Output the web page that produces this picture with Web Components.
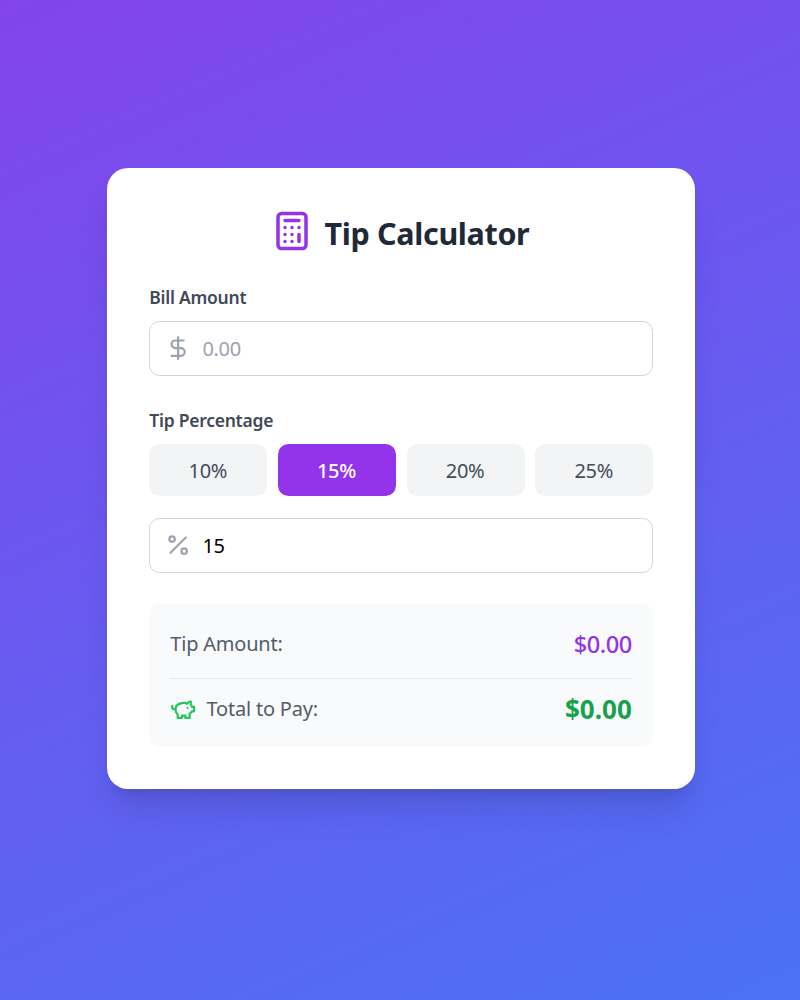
<!DOCTYPE html>
<html lang="en">
<head>
<meta charset="utf-8">
<title>Tip Calculator</title>
<style>
html, body { margin: 0; height: 100%; }
body { font-family: "Noto Sans", "Open Sans", sans-serif; }
</style>
</head>
<body>
<tip-calculator></tip-calculator>
<script>
const ICONS = {
  calculator: '<rect width="16" height="20" x="4" y="2" rx="2"/><path d="M8 6h8M16 14v4M16 10h.01M12 10h.01M8 10h.01M12 14h.01M8 14h.01M12 18h.01M8 18h.01"/>',
  dollar: '<path d="M12 2v20M17 5H9.5a3.5 3.5 0 0 0 0 7h5a3.5 3.5 0 0 1 0 7H6"/>',
  percent: '<path d="M19 5 5 19"/><circle cx="6.5" cy="6.5" r="2.5"/><circle cx="17.5" cy="17.5" r="2.5"/>',
  piggy: '<path d="M19 5c-1.5 0-2.8 1.4-3 2-3.5-1.5-11-.3-11 5 0 1.8 0 3 2 4.5V20h4v-2h3v2h4v-4c1-.5 1.7-1 2-2h2v-4h-2c0-1-.5-1.5-1-2V5z"/><path d="M2 9v1c0 1.1.9 2 2 2h1M16 11h.01"/>'
};
function define(name, html) {
  customElements.define(name, class extends HTMLElement {
    constructor() {
      super();
      this.attachShadow({ mode: 'open' }).innerHTML = html;
    }
  });
}
customElements.define('line-icon', class extends HTMLElement {
  connectedCallback() {
    if (this.shadowRoot) return;
    this.attachShadow({ mode: 'open' }).innerHTML = `
    <style>:host{display:block;flex:none;width:26.25px;height:26.25px} svg{display:block;width:100%;height:100%}</style>
    <svg viewBox="0 0 24 24" fill="none" stroke="currentColor" stroke-width="2" stroke-linecap="round" stroke-linejoin="round">${ICONS[this.getAttribute('name')]}</svg>`;
  }
});
define('card-title', `
<style>
:host{display:flex;align-items:center;justify-content:center;gap:11.5px;height:42px;color:#1f2937;padding-right:2px}
line-icon{width:42px;height:42px;color:#9333ea}
h1{margin:0;font-size:30.5px;line-height:42px;font-weight:700;letter-spacing:-.35px;padding-top:3px;white-space:nowrap}
</style>
<line-icon name="calculator"></line-icon><h1><slot></slot></h1>`);
define('field-label', `
<style>:host{display:block;font-size:17.5px;line-height:26px;font-weight:600;color:#3f4958;letter-spacing:-.25px}</style>
<slot></slot>`);
customElements.define('number-field', class extends HTMLElement {
  connectedCallback() {
    if (this.shadowRoot) return;
    this.attachShadow({ mode: 'open' }).innerHTML = `
    <style>
    :host{display:flex;align-items:center;gap:11px;box-sizing:border-box;height:55px;padding:0 15px;border:1.3px solid #d1d5db;border-radius:10.5px;background:#fff}
    line-icon{color:#9ca3af}
    .value{font-size:20px;line-height:28px;letter-spacing:-.35px;color:#000;padding-top:1px}
    :host([empty]) .value{color:#9ca3af}
    </style>
    <line-icon name="${this.getAttribute('icon')}"></line-icon><span class="value"><slot></slot></span>`;
  }
});
define('tip-option', `
<style>
:host{display:flex;align-items:center;justify-content:center;height:52.5px;border-radius:10.5px;background:#f3f4f6;color:#434d5b;font-size:20px;letter-spacing:-.3px}
:host([selected]){background:#9333ea;color:#fff;font-weight:500}
span{padding-right:1px}
</style><span><slot></slot></span>`);
define('tip-options', `
<style>:host{display:grid;grid-template-columns:repeat(4,1fr);gap:10.5px}</style><slot></slot>`);
define('result-row', `
<style>
:host{display:flex;align-items:center;justify-content:space-between;color:#535d6a;font-size:20px;line-height:32px}
.label{display:flex;align-items:center;gap:10px;letter-spacing:-.2px}
.amount{font-size:23.6px;font-weight:500;color:#9333ea;letter-spacing:-.5px;padding-right:.5px}
:host([total]) .amount{font-size:26px;font-weight:700;color:#16a34a;letter-spacing:0;padding-right:.5px}
::slotted(line-icon){color:#22c55e}
</style>
<div class="label"><slot name="icon"></slot><span><slot></slot></span></div><span class="amount"><slot name="amount"></slot></span>`);
define('result-panel', `
<style>
:host{display:block;box-sizing:border-box;height:143px;padding:24px 21px 0;border-radius:10.5px;background:#f9fafb}
.total{margin-top:18px;padding-top:14px;border-top:1.3px solid #e5e7eb}
</style>
<slot name="tip"></slot><div class="total"><slot name="total"></slot></div>`);
define('tip-calculator', `
<style>
:host{display:flex;justify-content:center;align-items:flex-start;box-sizing:border-box;height:1000px;padding:168.4px 0 0 2.5px;background:linear-gradient(156deg,#8344ec 0%,#4b72f4 100%)}
main{box-sizing:border-box;width:588px;height:621px;padding:42px;background:#fff;border-radius:21px;box-shadow:0 26px 33px -6.5px rgba(0,0,0,.1),0 10.5px 13px -8px rgba(0,0,0,.1)}
.bill{margin-top:31.6px}
.bill number-field{margin-top:11px}
.tip{margin-top:31.5px}
.tip tip-options{margin-top:10.5px}
.tip number-field{margin-top:21.5px}
result-panel{margin-top:31px}
</style>
<main>
<card-title>Tip Calculator</card-title>
<section class="bill"><field-label>Bill Amount</field-label><number-field icon="dollar" empty>0.00</number-field></section>
<section class="tip"><field-label>Tip Percentage</field-label>
<tip-options><tip-option>10%</tip-option><tip-option selected>15%</tip-option><tip-option>20%</tip-option><tip-option>25%</tip-option></tip-options>
<number-field icon="percent">15</number-field></section>
<result-panel>
<result-row slot="tip">Tip Amount:<span slot="amount">$0.00</span></result-row>
<result-row slot="total" total><line-icon slot="icon" name="piggy"></line-icon>Total to Pay:<span slot="amount">$0.00</span></result-row>
</result-panel>
</main>`);
</script>
</body>
</html>
